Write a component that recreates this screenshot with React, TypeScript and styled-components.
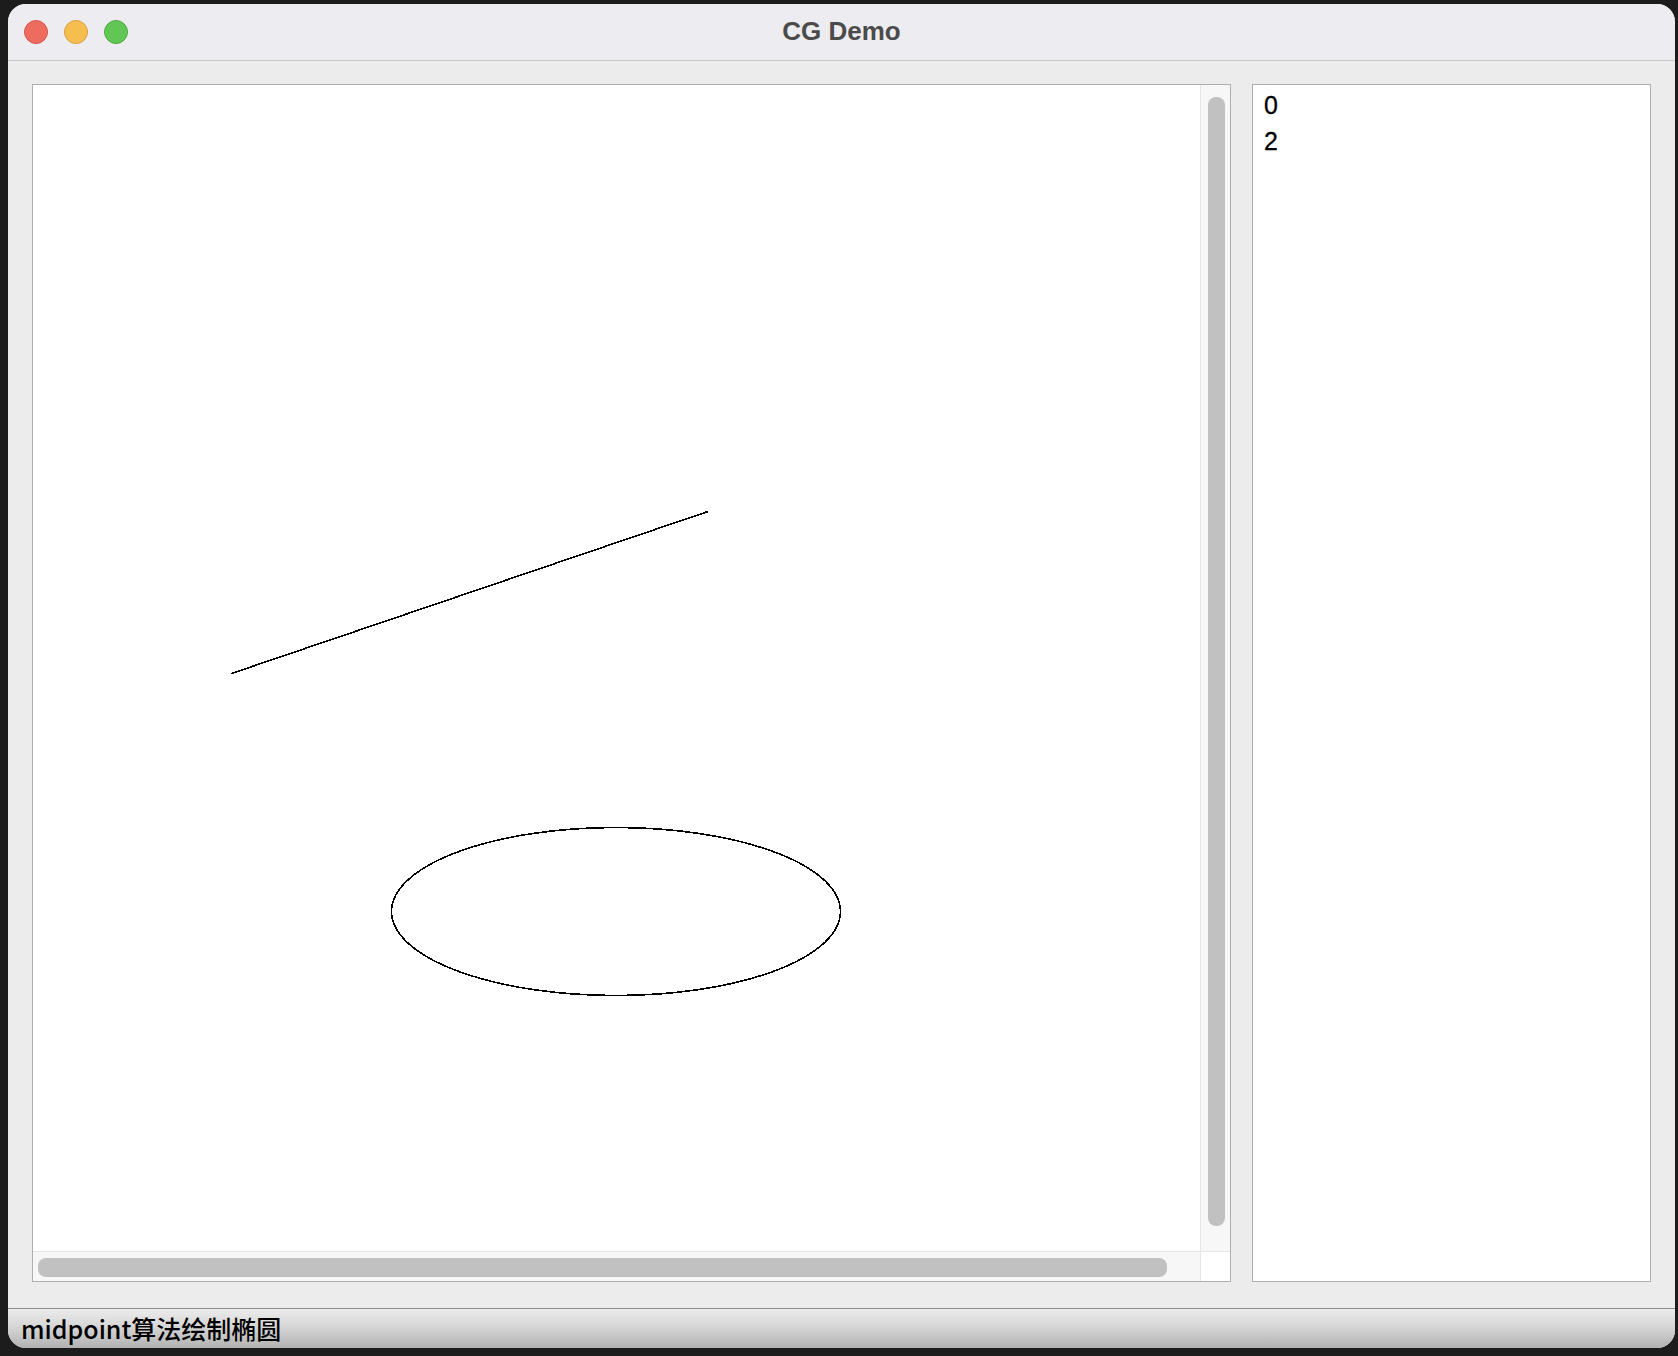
import styled, { createGlobalStyle } from "styled-components";

const GlobalStyle = createGlobalStyle`
  html, body {
    margin: 0;
    padding: 0;
    background: #1c1c1c;
  }
  * {
    box-sizing: border-box;
  }
`;

const Desktop = styled.div`
  width: 1678px;
  height: 1356px;
  padding: 4px 3px 8px 8px;
  background: #1c1c1c;
`;

const Window = styled.div`
  width: 100%;
  height: 100%;
  display: flex;
  flex-direction: column;
  border-radius: 18px;
  overflow: hidden;
  background: #ececec;
`;

const TitleBar = styled.div`
  position: relative;
  height: 57px;
  flex-shrink: 0;
  display: flex;
  align-items: center;
  justify-content: center;
  background: #edecf0;
  border-bottom: 1px solid #c9c9c9;
`;

const Lights = styled.div`
  position: absolute;
  left: 16px;
  top: 16px;
  display: flex;
  gap: 16px;
`;

const Light = styled.span<{ $fill: string; $edge: string }>`
  width: 24px;
  height: 24px;
  border-radius: 50%;
  background: ${(p) => p.$fill};
  border: 1px solid ${(p) => p.$edge};
`;

const Title = styled.div`
  font-family: "Liberation Sans", Arial, sans-serif;
  font-weight: 700;
  font-size: 26px;
  color: #4b4b4b;
  margin-top: -2px;
`;

const Body = styled.div`
  flex: 1;
  display: flex;
  gap: 21px;
  padding: 23px 24px 26px 24px;
  min-height: 0;
`;

const CanvasPanel = styled.div`
  width: 1199px;
  display: grid;
  grid-template-columns: 1fr 30px;
  grid-template-rows: 1fr 30px;
  border: 1px solid #aeaeae;
  background: #ffffff;
`;

const Drawing = styled.div`
  background: #ffffff;
  overflow: hidden;
`;

const Track = styled.div<{ $vertical?: boolean }>`
  display: flex;
  background: #f7f7f7;
  ${(p) =>
    p.$vertical
      ? `border-left: 1px solid #e6e6e6; padding: 12px 5px 25px 7px;`
      : `border-top: 1px solid #e6e6e6; padding: 6px 33px 4px 5px;`}
`;

const Thumb = styled.div`
  flex: 1;
  border-radius: 8px;
  background: #c1c1c1;
`;

const Corner = styled.div`
  background: #ffffff;
  border-left: 1px solid #e6e6e6;
  border-top: 1px solid #e6e6e6;
`;

const ListPanel = styled.div`
  flex: 1;
  background: #ffffff;
  border: 1px solid #aeaeae;
  padding: 2px 11px;
`;

const ListItem = styled.div`
  font-family: "Liberation Sans", Arial, sans-serif;
  font-size: 25px;
  line-height: 36px;
  color: #000000;
  -webkit-text-stroke: 0.3px #000;
`;

const StatusBar = styled.div`
  height: 40px;
  flex-shrink: 0;
  display: flex;
  align-items: center;
  padding: 0 13px 2px;
  border-top: 1px solid #8c8c8c;
  background: linear-gradient(#ececec, #d6d6d6 45%, #b2b2b2);
  font-family: "Noto Sans CJK SC", "Noto Sans", sans-serif;
  font-weight: 500;
  font-size: 25px;
  color: #000000;
`;

const items = ["0", "2"];

function App() {
  return (
    <Desktop>
      <GlobalStyle />
      <Window>
        <TitleBar>
          <Lights>
            <Light $fill="#ee6b60" $edge="#d8574c" />
            <Light $fill="#f6be4f" $edge="#d9a13f" />
            <Light $fill="#62c654" $edge="#4fab40" />
          </Lights>
          <Title>CG Demo</Title>
        </TitleBar>
        <Body>
          <CanvasPanel>
            <Drawing>
              <svg width="1167" height="1167" shapeRendering="crispEdges">
                <line
                  x1="198.5"
                  y1="588.5"
                  x2="675"
                  y2="426.5"
                  stroke="#000"
                  strokeWidth="1.6"
                />
                <ellipse
                  cx="583"
                  cy="826.5"
                  rx="224.5"
                  ry="84"
                  fill="none"
                  stroke="#000"
                  strokeWidth="1.6"
                />
              </svg>
            </Drawing>
            <Track $vertical>
              <Thumb />
            </Track>
            <Track>
              <Thumb />
            </Track>
            <Corner />
          </CanvasPanel>
          <ListPanel>
            {items.map((item, index) => (
              <ListItem key={index}>{item}</ListItem>
            ))}
          </ListPanel>
        </Body>
        <StatusBar>midpoint算法绘制椭圆</StatusBar>
      </Window>
    </Desktop>
  );
}

export default App;
